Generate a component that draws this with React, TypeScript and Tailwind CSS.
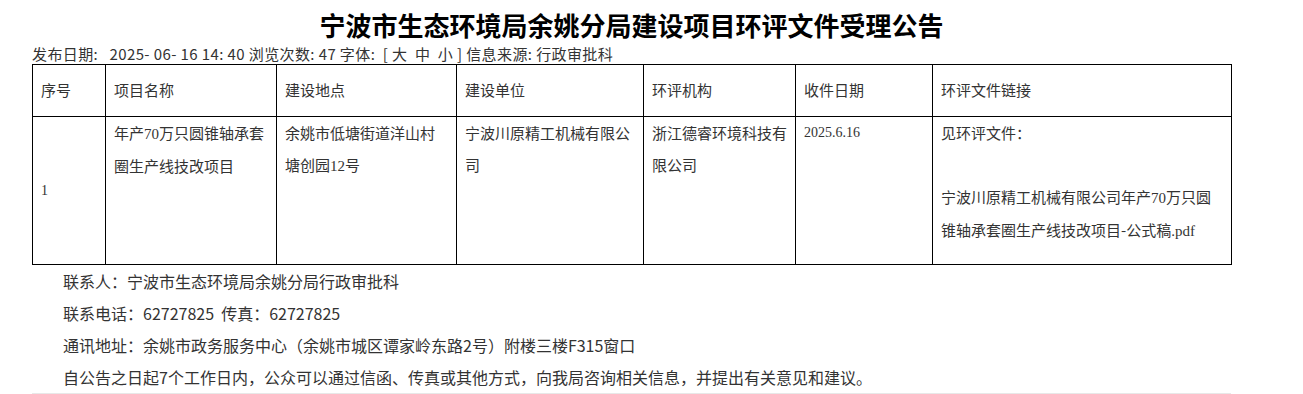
const cjk = { fontFamily: '"Noto Sans CJK SC", "Noto Sans", sans-serif' };
const serifCjk = { fontFamily: '"Liberation Serif", "Noto Sans CJK SC", serif' };

const headers = ["序号", "项目名称", "建设地点", "建设单位", "环评机构", "收件日期", "环评文件链接"];
const widths = ["w-[73px]", "w-[171px]", "w-[180px]", "w-[187px]", "w-[152px]", "w-[137px]", "w-[299px]"];

export default function App() {
  return (
    <div className="bg-white min-h-screen text-[#333]" style={cjk}>
      <div className="ml-[32px] w-[1199px]">
        <h1 className="pt-[9px] h-[43px] text-center text-[26px] leading-[32px] font-bold text-black">
          宁波市生态环境局余姚分局建设项目环评文件受理公告
        </h1>
        <div className="h-[21px] text-[15px] leading-[21px] whitespace-pre tracking-[0.4px]">
          发布日期:   2025- 06- 16 14: 40 浏览次数: 47 字体:  [ 大  中  小 ] 信息来源: 行政审批科
        </div>

        <table className="w-full table-fixed border-collapse border border-black">
          <colgroup>
            {widths.map((w) => (
              <col key={w} className={w} />
            ))}
          </colgroup>
          <thead>
            <tr className="h-[52px]">
              {headers.map((h) => (
                <th key={h} className="border border-black px-2 text-left font-normal text-[15px] align-middle">
                  {h}
                </th>
              ))}
            </tr>
          </thead>
          <tbody style={serifCjk} className="text-[15px] leading-[32px]">
            <tr className="h-[148px]">
              <td className="border border-black px-2 align-middle text-[14px]">1</td>
              <td className="border border-black px-2 align-top" style={cjk}>
                年产<span style={serifCjk}>70</span>万只圆锥轴承套
                <br />
                圈生产线技改项目
              </td>
              <td className="border border-black px-2 align-top" style={cjk}>
                余姚市低塘街道洋山村
                <br />
                塘创园<span style={serifCjk}>12</span>号
              </td>
              <td className="border border-black px-2 align-top" style={cjk}>
                宁波川原精工机械有限公
                <br />
                司
              </td>
              <td className="border border-black px-2 align-top" style={cjk}>
                浙江德睿环境科技有
                <br />
                限公司
              </td>
              <td className="border border-black px-2 align-top text-[14px]">2025.6.16</td>
              <td className="border border-black px-2 align-top" style={cjk}>
                <div>见环评文件：</div>
                <div className="h-[32px]" />
                <div className="whitespace-nowrap">
                  宁波川原精工机械有限公司年产<span style={serifCjk}>70</span>万只圆
                </div>
                <div className="whitespace-nowrap">
                  锥轴承套圈生产线技改项目-公式稿<span style={serifCjk}>.pdf</span>
                </div>
              </td>
            </tr>
          </tbody>
        </table>

        <div className="text-[16px] leading-[32px] border-b border-[#e8e8e8]">
          <p className="pl-[31px]">联系人：宁波市生态环境局余姚分局行政审批科</p>
          <p className="pl-[31px] whitespace-pre">联系电话：62727825  传真：62727825</p>
          <p className="pl-[31px]">通讯地址：余姚市政务服务中心（余姚市城区谭家岭东路2号）附楼三楼F315窗口</p>
          <p className="pl-[31px]">
            自公告之日起7个工作日内，公众可以通过信函、传真或其他方式，向我局咨询相关信息，并提出有关意见和建议。
          </p>
        </div>
      </div>
    </div>
  );
}
